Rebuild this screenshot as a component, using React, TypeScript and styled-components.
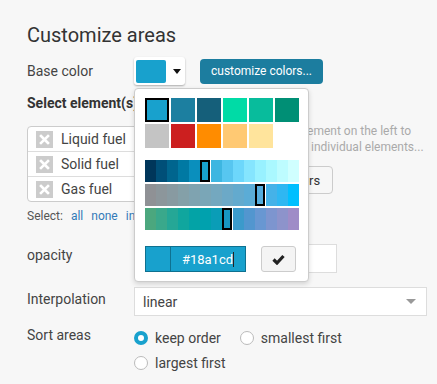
import styled, { createGlobalStyle } from "styled-components";

const GlobalStyle = createGlobalStyle`
  body {
    margin: 0;
    background: #f7f7f7;
    font-family: Roboto, "Liberation Sans", sans-serif;
    color: #444;
  }
`;

const BASE = "#18a1cd";

const presets = [
  "#18a1cd", "#1c7fa0", "#155f7a", "#00dba6", "#08bc9c", "#008f75",
  "#c4c4c4", "#cc1f1f", "#ff8c00", "#ffc973", "#ffe49c",
];

const ramps = [
  {
    picked: 5,
    colors: ["#00365a", "#004f78", "#00658e", "#0079a3", "#0a8fbd", "#18a1cd", "#3db6e1", "#57c6f0", "#6dd7fb", "#85e5fe", "#98f1ff", "#aaf8ff", "#bdfcff", "#d0ffff"],
  },
  {
    picked: 10,
    colors: ["#8f9195", "#8c969b", "#889aa1", "#84a0a8", "#7fa3b0", "#7aa6b7", "#74a8bf", "#6ca9c7", "#63aace", "#5bacd6", "#55addd", "#45b2e8", "#2fb7f2", "#00bfff"],
  },
  {
    picked: 7,
    colors: ["#4ba77e", "#3aa88b", "#25a796", "#10a69e", "#03a3a6", "#00a1ae", "#0a9db7", "#1797c2", "#3b9acb", "#5296cf", "#6897d2", "#7d95cf", "#8d93cb", "#9f8cc7"],
  },
];

const elements = ["Liquid fuel", "Solid fuel", "Gas fuel"];

const Page = styled.div`
  padding: 23px 10px 20px 27px;
`;

const Title = styled.h2`
  margin: 0;
  font-size: 20px;
  line-height: 24px;
  font-weight: 400;
  color: #333;
`;

const FormRow = styled.div<{ $mt: number; $center?: boolean }>`
  display: grid;
  grid-template-columns: 107px 1fr;
  align-items: ${(p) => (p.$center ? "center" : "start")};
  margin-top: ${(p) => p.$mt}px;
`;

const Label = styled.div<{ $pt?: number }>`
  font-size: 14px;
  line-height: 20px;
  padding-top: ${(p) => p.$pt ?? 0}px;
  color: #444;
`;

const Controls = styled.div`
  display: flex;
  align-items: center;
`;

const PickerButton = styled.div`
  position: relative;
  box-sizing: border-box;
  width: 51px;
  height: 28px;
  padding: 2px;
  display: flex;
  align-items: center;
  background: #fff;
  border-radius: 3px;
  box-shadow: 0 1px 2px rgba(0, 0, 0, 0.3);
`;

const PickerSwatch = styled.div`
  width: 30px;
  height: 23px;
  border-radius: 2px;
  background: ${BASE};
`;

const Caret = styled.div`
  margin-left: 7px;
  width: 0;
  height: 0;
  border-left: 4px solid transparent;
  border-right: 4px solid transparent;
  border-top: 5px solid #111;
`;

const PrimaryButton = styled.button`
  margin-left: 15px;
  height: 25px;
  padding: 0 11px;
  border: none;
  border-radius: 4px;
  background: #1c7d9f;
  color: #fff;
  font-family: Roboto, "Liberation Sans", sans-serif;
  font-size: 12px;
`;

const Popup = styled.div`
  position: absolute;
  left: 0;
  top: 31px;
  z-index: 10;
  box-sizing: border-box;
  width: 175px;
  padding: 9px 10px 9px 10px;
  background: #fff;
  border: 1px solid #ccc;
  border-radius: 4px;
  box-shadow: 0 2px 5px rgba(0, 0, 0, 0.15);
`;

const PresetGrid = styled.div`
  display: grid;
  grid-template-columns: repeat(6, 24px);
  gap: 2px;
`;

const Preset = styled.div<{ $color: string; $active?: boolean }>`
  box-sizing: border-box;
  height: 24px;
  background: ${(p) => p.$color};
  border: ${(p) => (p.$active ? "2px solid #000" : "none")};
`;

const Ramps = styled.div`
  margin-top: 12px;
  display: flex;
  flex-direction: column;
  gap: 2px;
`;

const Ramp = styled.div`
  display: grid;
  grid-template-columns: repeat(14, 11px);
  height: 22px;
`;

const RampCell = styled.div<{ $color: string; $active?: boolean }>`
  box-sizing: border-box;
  background: ${(p) => p.$color};
  ${(p) => (p.$active ? "border: 2px solid #000; width: 10px;" : "")}
`;

const PopupFooter = styled.div`
  margin-top: 16px;
  display: flex;
  align-items: center;
  justify-content: space-between;
  padding-right: 2px;
`;

const HexField = styled.div`
  box-sizing: border-box;
  display: flex;
  width: 101px;
  height: 26px;
  border: 1px solid #0e7190;
  background: ${BASE};
`;

const HexSwatch = styled.div`
  width: 24px;
  border-right: 1px solid #0e7190;
`;

const HexText = styled.div`
  flex: 1;
  display: flex;
  align-items: center;
  justify-content: center;
  color: #fff;
  font-size: 13px;
`;

const TextCaret = styled.span`
  display: inline-block;
  width: 1px;
  height: 15px;
  background: #222;
`;

const CheckButton = styled.button`
  box-sizing: border-box;
  width: 35px;
  height: 26px;
  display: flex;
  align-items: center;
  justify-content: center;
  background: #f4f4f4;
  border: 1px solid #ccc;
  border-radius: 3px;
  padding: 0;
`;

const SectionTitle = styled.div`
  margin-top: 8px;
  font-size: 14px;
  line-height: 20px;
  font-weight: 700;
  color: #333;
`;

const ElementsArea = styled.div`
  margin-top: 13px;
  display: flex;
  align-items: flex-start;
`;

const ElementList = styled.div`
  width: 200px;
  border: 1px solid #ccc;
  border-radius: 4px;
  background: #fff;
`;

const ElementRow = styled.div`
  display: flex;
  align-items: center;
  gap: 8px;
  height: 24px;
  padding-left: 8px;
  font-size: 14px;
  color: #444;
  & + & {
    border-top: 1px solid #ddd;
  }
`;

const RemoveIcon = styled.div`
  width: 17px;
  height: 17px;
  display: flex;
  align-items: center;
  justify-content: center;
  background: #ccc;
`;

const Hint = styled.div`
  margin-left: 10px;
  margin-top: -3px;
  display: flex;
  flex-direction: column;
  align-items: flex-start;
`;

const HintText = styled.div`
  font-size: 12px;
  line-height: 16px;
  color: #aaa;
  white-space: nowrap;
`;

const GhostButton = styled.button`
  margin-top: 11px;
  height: 28px;
  padding: 0 12px;
  background: #f7f7f7;
  border: 1px solid #ccc;
  border-radius: 4px;
  font-family: Roboto, "Liberation Sans", sans-serif;
  font-size: 13px;
  color: #333;
`;

const SelectLinks = styled.div`
  margin-top: 6px;
  display: flex;
  gap: 8px;
  font-size: 12px;
  line-height: 16px;
  color: #555;
`;

const LinkText = styled.a`
  color: #337ab7;
  text-decoration: none;
`;

const OpacityControls = styled.div`
  display: flex;
  align-items: center;
  width: 203px;
  height: 29px;
`;

const Track = styled.div`
  flex: 1;
  height: 4px;
  background: #ddd;
  border-radius: 2px;
  margin-right: 12px;
`;

const NumberBox = styled.div`
  box-sizing: border-box;
  width: 57px;
  height: 29px;
  background: #fff;
  border: 1px solid #ddd;
`;

const SelectBox = styled.div`
  box-sizing: border-box;
  height: 29px;
  display: flex;
  align-items: center;
  justify-content: space-between;
  padding: 0 10px 0 8px;
  background: #fff;
  border: 1px solid #ddd;
  font-size: 14px;
  color: #444;
`;

const SelectArrow = styled.div`
  width: 0;
  height: 0;
  border-left: 5px solid transparent;
  border-right: 5px solid transparent;
  border-top: 5px solid #999;
`;

const RadioGroup = styled.div`
  padding-top: 3px;
  display: flex;
  flex-wrap: wrap;
  column-gap: 19px;
  row-gap: 5px;
`;

const RadioOption = styled.label`
  display: flex;
  align-items: center;
  gap: 7px;
  font-size: 14px;
  line-height: 20px;
  color: #444;
`;

const RadioCircle = styled.span<{ $checked?: boolean }>`
  box-sizing: border-box;
  width: 14px;
  height: 14px;
  border-radius: 50%;
  background: #fff;
  border: ${(p) => (p.$checked ? `4px solid ${BASE}` : "1px solid #bbb")};
`;

function Cross() {
  return (
    <svg width="11" height="11" viewBox="0 0 11 11">
      <path d="M2 2 L9 9 M9 2 L2 9" stroke="#fff" strokeWidth="2.6" strokeLinecap="square" />
    </svg>
  );
}

function Check() {
  return (
    <svg width="13" height="11" viewBox="0 0 13 11">
      <path d="M1.5 5.5 L5 9 L11.5 2" stroke="#222" strokeWidth="3.2" fill="none" />
    </svg>
  );
}

function ColorPopup() {
  return (
    <Popup>
      <PresetGrid>
        {presets.map((c, i) => (
          <Preset key={i} $color={c} $active={i === 0} />
        ))}
      </PresetGrid>
      <Ramps>
        {ramps.map((r, ri) => (
          <Ramp key={ri}>
            {r.colors.map((c, i) => (
              <RampCell key={i} $color={c} $active={i === r.picked} />
            ))}
          </Ramp>
        ))}
      </Ramps>
      <PopupFooter>
        <HexField>
          <HexSwatch />
          <HexText>
            #18a1cd
            <TextCaret />
          </HexText>
        </HexField>
        <CheckButton>
          <Check />
        </CheckButton>
      </PopupFooter>
    </Popup>
  );
}

export default function App() {
  return (
    <>
      <GlobalStyle />
      <Page>
        <Title>Customize areas</Title>

        <FormRow $mt={10} $center>
          <Label>Base color</Label>
          <Controls>
            <PickerButton>
              <PickerSwatch />
              <Caret />
              <ColorPopup />
            </PickerButton>
            <PrimaryButton>customize colors...</PrimaryButton>
          </Controls>
        </FormRow>

        <SectionTitle>Select element(s)</SectionTitle>
        <ElementsArea>
          <ElementList>
            {elements.map((name) => (
              <ElementRow key={name}>
                <RemoveIcon>
                  <Cross />
                </RemoveIcon>
                {name}
              </ElementRow>
            ))}
          </ElementList>
          <Hint>
            <HintText>
              Select one element on the left to
              <br />
              to customize individual elements...
            </HintText>
            <GhostButton>reset colors</GhostButton>
          </Hint>
        </ElementsArea>
        <SelectLinks>
          <span>Select:</span>
          <LinkText>all</LinkText>
          <LinkText>none</LinkText>
          <LinkText>invert</LinkText>
        </SelectLinks>

        <FormRow $mt={20}>
          <Label $pt={1}>opacity</Label>
          <OpacityControls>
            <Track />
            <NumberBox />
          </OpacityControls>
        </FormRow>

        <FormRow $mt={14}>
          <Label $pt={2}>Interpolation</Label>
          <SelectBox>
            linear
            <SelectArrow />
          </SelectBox>
        </FormRow>

        <FormRow $mt={9}>
          <Label>Sort areas</Label>
          <RadioGroup>
            <RadioOption>
              <RadioCircle $checked />
              keep order
            </RadioOption>
            <RadioOption>
              <RadioCircle />
              smallest first
            </RadioOption>
            <RadioOption>
              <RadioCircle />
              largest first
            </RadioOption>
          </RadioGroup>
        </FormRow>
      </Page>
    </>
  );
}
